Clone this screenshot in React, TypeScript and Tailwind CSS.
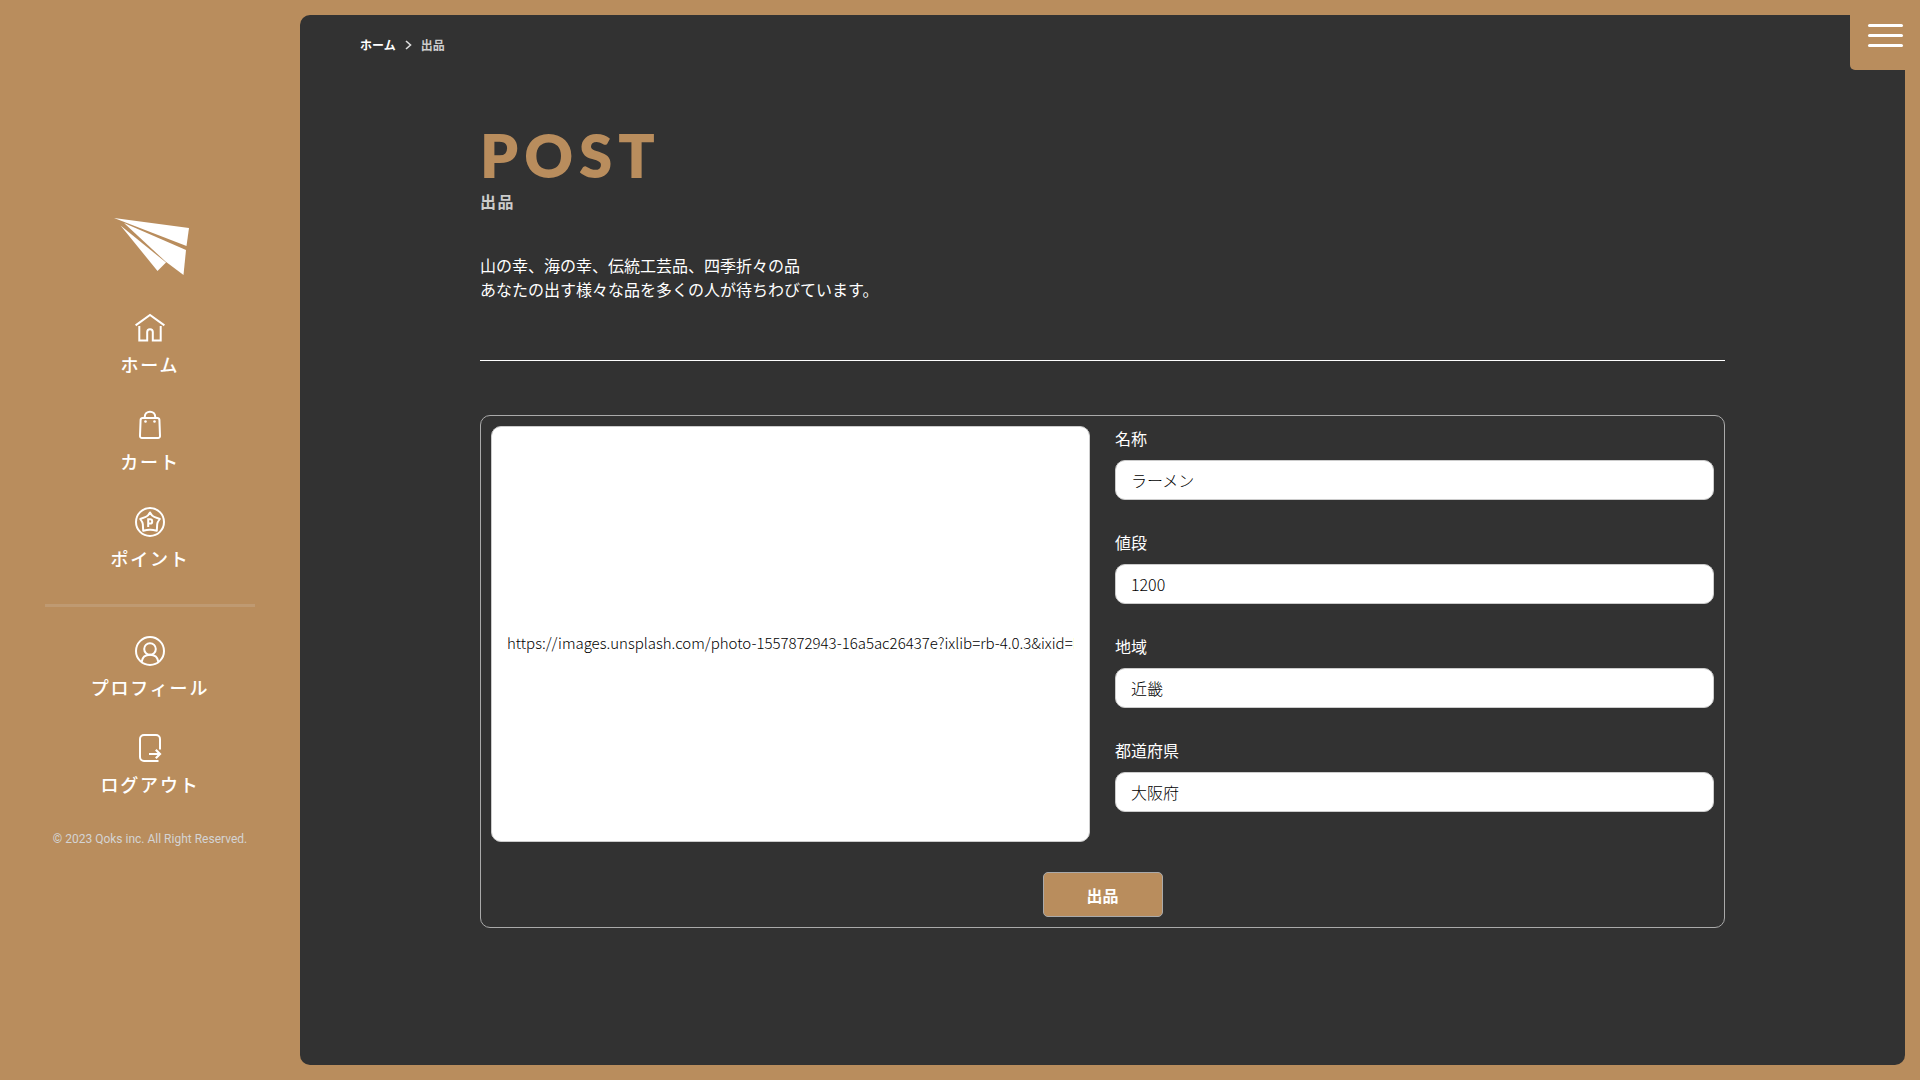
import React, { useState } from "react";

const iconProps = {
  width: 30,
  height: 30,
  viewBox: "0 0 30 30",
  fill: "none",
  stroke: "currentColor",
  strokeWidth: 2,
  "aria-hidden": true,
} as const;

const HomeIcon = () => (
  <svg {...iconProps}>
    <path d="M0.6 12.4 15 2l14.400 10.400" />
    <path d="M4.300 13V27.500H12.200V19a2.800 2.800 0 0 1 5.600 0V27.500H25.700V13" />
  </svg>
);

const CartIcon = () => (
  <svg {...iconProps}>
    <path d="M7.6 8h14.8a2 2 0 0 1 2 1.8l.6 16a2 2 0 0 1-2 2.2H7a2 2 0 0 1-2-2.2l.6-16a2 2 0 0 1 2-1.8Z" />
    <path d="M9.8 8V6.500a5.200 4.800 0 0 1 10.400 0V8" />
    <circle cx="10.500" cy="11.500" r="1.300" fill="currentColor" stroke="none" />
    <circle cx="19.500" cy="11.500" r="1.300" fill="currentColor" stroke="none" />
  </svg>
);

const PointIcon = () => (
  <svg {...iconProps}>
    <circle cx="15" cy="15" r="14" />
    <path
      d="M15 5.500Q16.800 9 19.200 9.900L24.800 12Q22.300 15.200 22.200 17L21.800 23.800Q17 22.600 15 22.800Q13 22.600 8.200 23.800L7.800 17Q7.700 15.200 5.200 12L10.800 9.900Q13.200 9 15 5.500Z"
      strokeLinejoin="round"
    />
    <path d="M13.200 20V12.200h1.900a2.100 2.200 0 0 1 0 4.400H13.200" />
  </svg>
);

const ProfileIcon = () => (
  <svg {...iconProps}>
    <circle cx="15" cy="15" r="14" />
    <circle cx="15" cy="13" r="5.800" />
    <path d="M6.600 26C7.200 21.500 10.500 18.700 15 18.700s7.800 2.800 8.400 7.300" />
  </svg>
);

const LogoutIcon = () => (
  <svg {...iconProps}>
    <path d="M23.500 28H9a4 4 0 0 1-4-4V6a4 4 0 0 1 4-4h12a4 4 0 0 1 4 4v10.500" />
    <path d="M14 21h11M20.800 16.800 25 21l-4.200 4.200" strokeWidth={2.200} />
  </svg>
);

const Logo = () => (
  <svg width="80" height="58" viewBox="-4 0 80 58" fill="#fff" aria-hidden="true">
    <path d="M0 0 75 10 72.500 28Z" />
    <path d="M10 5 72 32 69.500 57 51.500 43.500Z" />
    <path d="M6.500 7.500 52 44.500 43.500 53Z" />
  </svg>
);

const mainLinks = [
  { label: "ホーム", Icon: HomeIcon },
  { label: "カート", Icon: CartIcon },
  { label: "ポイント", Icon: PointIcon },
];

const accountLinks = [
  { label: "プロフィール", Icon: ProfileIcon },
  { label: "ログアウト", Icon: LogoutIcon },
];

function NavList({ items }: { items: typeof mainLinks }) {
  return (
    <ul className="flex flex-col gap-8">
      {items.map(({ label, Icon }) => (
        <li key={label}>
          <a href="#" className="flex flex-col items-center gap-2 text-lg leading-[27px] font-medium tracking-widest">
            <Icon />
            {label}
          </a>
        </li>
      ))}
    </ul>
  );
}

function Sidebar() {
  return (
    <aside className="flex w-[300px] shrink-0 flex-col items-center justify-center pb-3.5 text-white">
      <a href="#" aria-label="Qoks" className="mb-[37px]">
        <Logo />
      </a>
      <nav className="flex w-full flex-col px-[45px]">
        <NavList items={mainLinks} />
        <hr className="mt-8 mb-[29px] border-0 border-t-3 border-[#bf9a72]" />
        <NavList items={accountLinks} />
      </nav>
      <small className="mt-8 font-['Roboto',sans-serif] text-xs leading-[18px] text-[#d4d4d4]">
        © 2023 Qoks inc. All Right Reserved.
      </small>
    </aside>
  );
}

const fields = [
  { id: "name", label: "名称", initial: "ラーメン" },
  { id: "price", label: "値段", initial: "1200" },
  { id: "area", label: "地域", initial: "近畿" },
  { id: "prefecture", label: "都道府県", initial: "大阪府" },
];

const photoUrl =
  "https://images.unsplash.com/photo-1557872943-16a5ac26437e?ixlib=rb-4.0.3&ixid=MnwxMjA3fDB8MHxwaG90by1wYWdlfHx8fGVufDB8fHx8";

function PostForm() {
  const [image, setImage] = useState(photoUrl);
  const [values, setValues] = useState<Record<string, string>>(
    Object.fromEntries(fields.map((f) => [f.id, f.initial])),
  );
  return (
    <form
      className="flex flex-col items-center gap-[30px] rounded-[10px] border border-[#aaa] p-2.5"
      onSubmit={(e) => e.preventDefault()}
    >
      <div className="grid w-full grid-cols-2 gap-[25px]">
        <input
          aria-label="画像URL"
          value={image}
          onChange={(e) => setImage(e.target.value)}
          className="h-full w-full min-w-0 rounded-[10px] border border-[#ccc] bg-white px-[15px] pt-4 text-[15px] font-light text-black"
        />
        <div className="flex flex-col gap-[30px] pb-[30px]">
          {fields.map((f) => (
            <div key={f.id} className="flex flex-col gap-2.5">
              <label htmlFor={f.id} className="text-base leading-6 text-white">
                {f.label}
              </label>
              <input
                id={f.id}
                value={values[f.id]}
                onChange={(e) => setValues({ ...values, [f.id]: e.target.value })}
                className="h-10 w-full rounded-[10px] border border-[#ccc] bg-white px-[15px] text-base font-light text-black"
              />
            </div>
          ))}
        </div>
      </div>
      <button
        type="submit"
        className="h-[45px] w-[120px] rounded-[5px] border border-[#aaa] bg-[#b98d5d] text-base font-bold text-white"
      >
        出品
      </button>
    </form>
  );
}

export default function App() {
  return (
    <div className="relative flex min-h-screen bg-[#b98d5d] font-['Noto_Sans_CJK_JP',sans-serif]">
      <Sidebar />
      <main className="my-[15px] mr-[15px] min-w-0 flex-1 rounded-[10px] bg-[#323232] text-white">
        <nav aria-label="breadcrumb" className="flex items-center gap-2 px-[60px] pt-5 text-xs leading-5 font-bold">
          <a href="#">ホーム</a>
          <svg width="9" height="10" viewBox="0 0 9 10" fill="none" stroke="#ddd" strokeWidth="1.6" aria-hidden="true">
            <path d="m2 1 4.500 4L2 9" />
          </svg>
          <span className="text-[#ccc]">出品</span>
        </nav>
        <div className="px-[180px]">
          <header className="pt-[66px]">
            <h1 className="font-['Lato',sans-serif] text-[60px] leading-[68px] font-extrabold tracking-widest text-[#b98d5d]">
              POST
            </h1>
            <p className="leading-6 font-bold tracking-widest text-[#ccc]">出品</p>
          </header>
          <p className="mt-10 text-base leading-6">
            山の幸、海の幸、伝統工芸品、四季折々の品
            <br />
            あなたの出す様々な品を多くの人が待ちわびています。
          </p>
          <hr className="mt-[59px] mb-[54px] border-white" />
          <PostForm />
        </div>
      </main>
      <button
        type="button"
        aria-label="メニュー"
        className="absolute top-0 right-0 flex h-[70px] w-[70px] flex-col items-center justify-center gap-[7px] rounded-bl-[5px] bg-[#b98d5d]"
      >
        <span className="h-[3px] w-[35px] rounded-sm bg-white" />
        <span className="h-[3px] w-[35px] rounded-sm bg-white" />
        <span className="h-[3px] w-[35px] rounded-sm bg-white" />
      </button>
    </div>
  );
}
